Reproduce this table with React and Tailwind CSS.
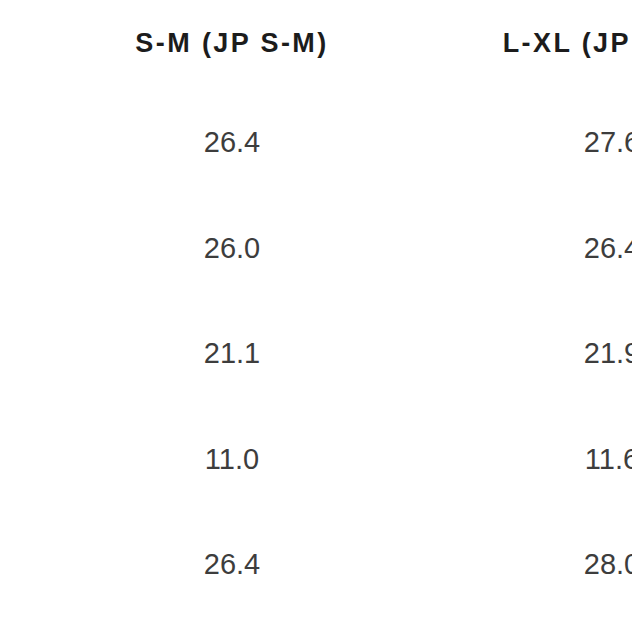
const columns = [
  { label: 'S-M (JP S-M)', values: ['26.4', '26.0', '21.1', '11.0', '26.4'] },
  { label: 'L-XL (JP L-XL)', values: ['27.6', '26.4', '21.9', '11.6', '28.0'] },
];

export default function App() {
  return (
    <div className="h-[632px] w-[632px] overflow-hidden bg-white font-['Liberation_Sans',Arial,sans-serif]">
      <div className="flex pl-[42px]">
        {columns.map((col) => (
          <div key={col.label} className="flex w-[380px] shrink-0 flex-col items-center">
            {/* Header */}
            <div className="flex h-[86px] items-center whitespace-nowrap text-[27px] font-bold tracking-[2.4px] text-[#1c1c1c]">
              {col.label}
            </div>
            {/* Values */}
            <div className="mt-[4px] flex flex-col">
              {col.values.map((v, i) => (
                <div
                  key={i}
                  className="flex h-[105.5px] items-center justify-center text-[29px] text-[#3d3d3d]"
                >
                  {v}
                </div>
              ))}
            </div>
          </div>
        ))}
      </div>
    </div>
  );
}
